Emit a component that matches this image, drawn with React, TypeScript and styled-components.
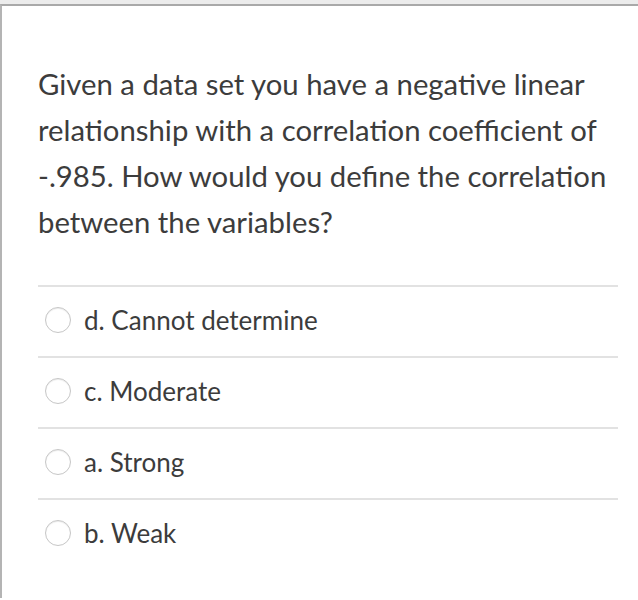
import React from "react";
import styled, { createGlobalStyle } from "styled-components";

const Global = createGlobalStyle`
  html, body { margin: 0; padding: 0; background: #fff; }
  body { font-family: Lato, "Open Sans", sans-serif; }
`;

const TopStrip = styled.div`
  height: 4px;
  background: #ececec;
`;

const Frame = styled.div`
  border-top: 2px solid #a9a9a9;
  border-left: 2px solid #b4b4b4;
  min-height: 594px;
  box-sizing: border-box;
  padding: 55px 20px 0 36px;
`;

const Question = styled.p`
  margin: 0;
  font-size: 29.3px;
  line-height: 46px;
  color: #3c3c3c;
`;

const Options = styled.div`
  margin-top: 40px;
  display: flex;
  flex-direction: column;
`;

const Option = styled.label`
  display: flex;
  align-items: center;
  gap: 13px;
  height: 65px;
  padding-bottom: 4px;
  border-top: 2px solid #e2e2e2;
  padding-left: 7px;
  font-size: 26px;
  color: #3c3c3c;
`;

const Radio = styled.span`
  width: 24px;
  height: 24px;
  border-radius: 50%;
  border: 1.5px solid #c6c6c6;
  box-shadow: inset 0 1px 1px rgba(0,0,0,0.08);
  background: #fff;
  flex: none;
`;

const options = ["d. Cannot determine", "c. Moderate", "a. Strong", "b. Weak"];

export default function App() {
  return (
    <>
      <Global />
      <TopStrip />
      <Frame>
        <Question>
          Given a data set you have a negative linear relationship with a correlation coefficient of -.985. How would you define the correlation between the variables?
        </Question>
        <Options>
          {options.map((o) => (
            <Option key={o}>
              <Radio />
              <span>{o}</span>
            </Option>
          ))}
        </Options>
      </Frame>
    </>
  );
}
